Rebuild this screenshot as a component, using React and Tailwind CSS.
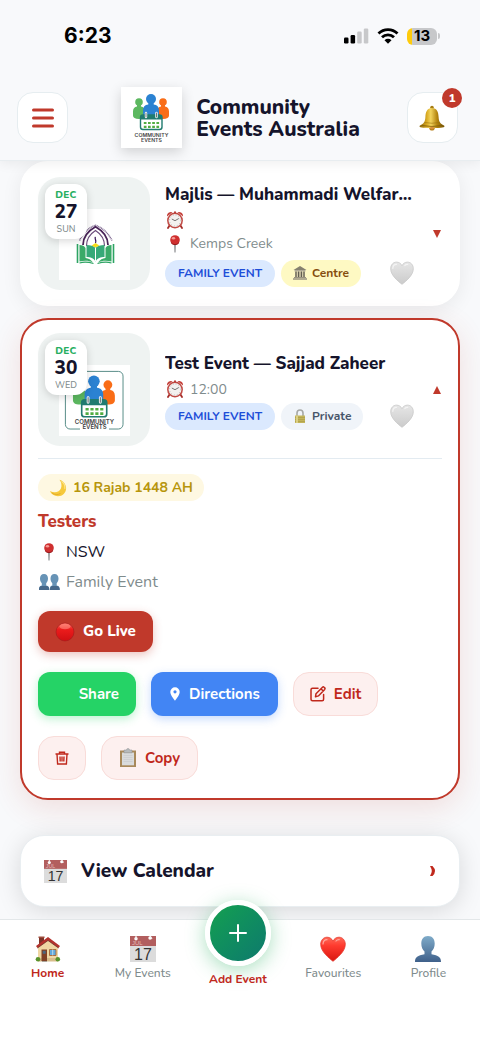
import React, { useState } from "react";

const BellIcon = () => (
  <svg width="26" height="26" viewBox="0 0 26 26" aria-hidden="true">
    <defs>
      <linearGradient id="bellGold" x1="0" x2="1">
        <stop offset="0" stopColor="#8a6508" />
        <stop offset="0.3" stopColor="#dcae26" />
        <stop offset="0.45" stopColor="#f2d45e" />
        <stop offset="0.7" stopColor="#b5850f" />
        <stop offset="1" stopColor="#735204" />
      </linearGradient>
    </defs>
    <circle cx="13" cy="2.6" r="1.8" fill="#a67c12" />
    <circle cx="13" cy="22.8" r="2.8" fill="#b8801c" />
    <path d="M13 3c5 0 6.4 4 6.6 9 .2 4.500 1.500 6.600 5.400 8.600.8.500.5 1.500-.5 1.700-7 1.200-16 1.200-23 0-1-.2-1.300-1.200-.5-1.700 3.900-2 5.200-4.100 5.400-8.600C6.600 7 8 3 13 3z" fill="url(#bellGold)" />
    <path d="M2.500 20.500q10.500 2 21 0" stroke="#7c5908" strokeWidth="0.8" fill="none" />
    <path d="M5.500 17.500q7.500 1.500 15 0" stroke="#9c7410" strokeWidth="0.6" fill="none" />
    <ellipse cx="13" cy="23" rx="2" ry="1.300" fill="#d98f3a" />
  </svg>
);

const ClockIcon = () => (
  <svg width="18" height="18" viewBox="0 0 18 18" aria-hidden="true">
    <path d="M3.500 14.500 2 17M14.500 14.500 16 17" stroke="#a52d28" strokeWidth="1.800" strokeLinecap="round" />
    <path d="M1 5.500A4 4 0 0 1 6.500 1.300zM17 5.500a4 4 0 0 0-5.500-4.200z" fill="#c4403a" />
    <path d="M8 .5h2v2H8z" fill="#b43a34" />
    <circle cx="9" cy="9.500" r="7.200" fill="#f3f1ef" stroke="#c04a44" strokeWidth="1.500" />
    <circle cx="9" cy="9.500" r="5.500" fill="none" stroke="#8d8d8d" strokeWidth="0.700" strokeDasharray="0.700 2.180" />
    <path d="M5.800 8 9 9.700l3.800-2.200" stroke="#666" strokeWidth="0.900" fill="none" />
  </svg>
);

const PinIcon = () => (
  <svg width="20" height="18" viewBox="0 0 20 18" aria-hidden="true">
    <path d="M9.200 8h1.600l-.3 9.500h-1z" fill="#7d7f82" />
    <circle cx="10" cy="5" r="4.800" fill="#cf2f2f" />
    <path d="M6 7.500a4.800 4.800 0 0 0 8 0" stroke="#94191c" strokeWidth="1" fill="none" />
    <ellipse cx="8.500" cy="3.200" rx="1.700" ry="1.300" fill="#f59b95" />
  </svg>
);

const HeartIcon = ({ red, className }) => (
  <svg className={className} viewBox="0 0 26 26" aria-hidden="true">
    <defs>
      <linearGradient id="heartRed" x1="0" y1="0" x2="0" y2="1">
        <stop offset="0" stopColor="#ff6a58" />
        <stop offset="0.350" stopColor="#ff3b2f" />
        <stop offset="1" stopColor="#d8160f" />
      </linearGradient>
      <linearGradient id="heartGrey" x1="0" y1="0" x2="0" y2="1">
        <stop offset="0" stopColor="#e6e6e6" />
        <stop offset="1" stopColor="#cbcbcb" />
      </linearGradient>
    </defs>
    <path
      d="M13 25.300C9 22 .7 15.700.7 8.300.7 4.400 3.400 1.200 7 1.200c2.700 0 4.900 1.500 6 3.900 1.100-2.400 3.300-3.900 6-3.900 3.600 0 6.300 3.200 6.300 7.100 0 7.400-8.300 13.700-12.300 17z"
      fill={red ? "url(#heartRed)" : "url(#heartGrey)"}
      stroke={red ? "#e4382c" : "#c8c8c8"}
      strokeWidth="0.800"
    />
    <path d="M3 8c.2-2.500 2-4.300 4-4.300M16 5c.8-1 2-1.400 3.200-1.300" stroke={red ? "#ffa79d" : "#f4f4f4"} strokeWidth="1.200" fill="none" strokeLinecap="round" />
  </svg>
);

const CalendarIcon = ({ className }) => (
  <svg className={className} viewBox="0 0 26 26" aria-hidden="true">
    <path d="M0 0h26v26H0z" fill="#dcdcdc" />
    <path d="M0 0h26v10H0z" fill="#b25e5e" />
    <circle cx="6" cy="2.800" r="1.700" fill="#fff" />
    <circle cx="20" cy="2" r="1.700" fill="#fff" />
    <path d="M6 0v3M20 0l2 3" stroke="#f2f2f2" strokeWidth="1.200" />
    <text x="2" y="9" fontSize="6" fontWeight="400" fill="#e3b9b9" fontFamily="Liberation Sans, sans-serif">JUL</text>
    <text x="13" y="23.500" fontSize="16" fontWeight="400" textAnchor="middle" fill="#333" fontFamily="Liberation Sans, sans-serif">17</text>
  </svg>
);

const CentreIcon = () => (
  <svg width="14" height="14" viewBox="0 0 14 14" aria-hidden="true">
    <path d="M7 0 13.500 4H.5z" fill="#85806f" />
    <path d="M1.500 4h11v1.500h-11z" fill="#b0aa96" />
    <path d="M2 5.500h10V11H2z" fill="#d8d0ae" />
    <path d="M3 5.500V11M5.600 5.500V11M8.400 5.500V11M11 5.500V11" stroke="#615d50" strokeWidth="1.300" />
    <path d="M1 11h12v1H1zM0 12.200h14v1.500H0z" fill="#999280" />
  </svg>
);

const LockIcon = () => (
  <svg width="14" height="14" viewBox="0 0 14 14" aria-hidden="true">
    <path d="M4 7V4a3 3 0 0 1 6 0v3" stroke="#a6a8a5" strokeWidth="1.600" fill="none" />
    <path d="M2 6.500h10V14H2z" fill="#c3b45a" />
    <path d="M2 8.500h10M2 10.500h10M2 12.500h10" stroke="#a89944" strokeWidth="0.600" />
    <path d="M3 6.500h2V14H3z" fill="#dbcf83" />
  </svg>
);

const MoonIcon = () => (
  <svg width="18" height="18" viewBox="0 0 18 18" aria-hidden="true">
    <path d="M10.500.8c4 1.200 6.600 4.700 6.600 8.500 0 4.500-3.600 8-8.200 8-3.600 0-6.700-2-8-5.200 5 2.400 9.500 1 11-2.600 1.200-3 .5-6.200-1.400-8.700z" fill="#f6c93c" />
    <path d="M12.500 2.500c2.800 1.800 3.700 4.700 3.300 7.300" stroke="#fbe38a" strokeWidth="1.200" fill="none" />
    <path d="M3 14c2.500 1.800 6 2 8.500.5" stroke="#e0a92a" strokeWidth="0.900" fill="none" />
  </svg>
);

const PeopleIcon = () => (
  <svg width="22" height="18" viewBox="0 0 22 18" aria-hidden="true">
    <g fill="#6793b6">
      <path d="M6 1c2.600 0 4 1.900 4 4.500 0 2-.8 3.700-1.800 4.700v2.300c2.600.6 3.100 1.800 3.100 4.500H1c0-2.700.4-3.900 2.800-4.500v-2.300C2.800 9.200 2 7.500 2 5.500 2 2.900 3.400 1 6 1z" />
      <path d="M16.500 1c2.600 0 4 1.900 4 4.500 0 2-.8 3.700-1.800 4.700v2.300c2.500.6 3 1.800 3 4.500H12c0-2.700-.1-3.900 2.300-4.500v-2.300c-1-1-1.800-2.700-1.800-4.700 0-2.600 1.400-4.500 4-4.500z" />
    </g>
    <path d="M1 17c0-2.400.4-3.400 2-4.100h6c1.800.7 2.300 1.700 2.300 4.100zM12 17c0-2.400.4-3.400 2-4.100h5.500c1.800.7 2.200 1.700 2.200 4.100z" fill="#47688a" />
  </svg>
);

const ProfileIcon = () => (
  <svg width="26" height="26" viewBox="0 0 26 26" aria-hidden="true">
    <defs>
      <linearGradient id="bustBlue" x1="0" y1="0" x2="0" y2="1">
        <stop offset="0" stopColor="#7fabc9" />
        <stop offset="1" stopColor="#3f608a" />
      </linearGradient>
    </defs>
    <path d="M13 0c4.600 0 6.700 3.200 6.700 7.600 0 3.400-1.300 6.300-3.200 8v2.700c6.800 1.300 9.500 2.700 9.500 7.700H0c0-5 2.700-6.400 9.500-7.700v-2.700c-1.900-1.700-3.200-4.600-3.200-8C6.300 3.200 8.400 0 13 0z" fill="url(#bustBlue)" />
  </svg>
);

const HouseIcon = () => (
  <svg width="26" height="26" viewBox="0 0 26 26" aria-hidden="true">
    <path d="M4 1.500h5V10H4z" fill="#7c3328" />
    <path d="M3.500.5h6V2h-6z" fill="#9d4b3b" />
    <path d="M3 10 13 3l10 7v15H3z" fill="#f0d7a4" />
    <path d="M3 22h20v3.500H3z" fill="#d8bd8b" />
    <path d="M13 1 25 10l-1.500 2L13 4.500 2.500 12 1 10z" fill="#b4332e" />
    <path d="M13 4.500 2.500 12M13 4.500 23.500 12" stroke="#612721" strokeWidth="0.700" />
    <path d="M6.500 13.500h5.500V25H6.500z" fill="#814126" />
    <path d="M7.700 14.800h3v3h-3z" fill="#4e6780" />
    <path d="M14.500 13.500h6.500v6h-6.500z" fill="#62a9dc" stroke="#a9652f" strokeWidth="0.900" />
    <path d="M17.700 13.500v6" stroke="#dfedf5" strokeWidth="0.700" />
    <circle cx="3" cy="23.300" r="2.300" fill="#59922b" />
    <circle cx="22.800" cy="23.300" r="2.300" fill="#59922b" />
    <path d="M7 25h5v1H7z" fill="#a9a49a" />
  </svg>
);

const RedCircleIcon = () => (
  <svg width="20" height="20" viewBox="0 0 20 20" aria-hidden="true">
    <defs>
      <linearGradient id="ballRed" x1="0" y1="0" x2="0" y2="1">
        <stop offset="0" stopColor="#ff6b5e" />
        <stop offset="0.350" stopColor="#ec1c1c" />
        <stop offset="1" stopColor="#d00f12" />
      </linearGradient>
    </defs>
    <circle cx="10" cy="10" r="9" fill="url(#ballRed)" stroke="#98191a" strokeWidth="0.500" />
    <ellipse cx="10" cy="4.500" rx="5.500" ry="2.800" fill="#ff9d90" opacity="0.500" />
  </svg>
);

const ClipboardIcon = () => (
  <svg width="18" height="20" viewBox="0 0 18 20" aria-hidden="true">
    <path d="M1 2.500h16V19H1z" fill="#a8895a" />
    <path d="M3 4.500h12v12.800H3z" fill="#d9dbdc" />
    <path d="M4.500 7.500h9M4.500 9.500h9M4.500 11.500h9M4.500 13.500h9" stroke="#c8cbcd" strokeWidth="0.700" />
    <path d="M5 2h2.500a1.500 1.500 0 0 1 3 0H13v2.800H5z" fill="#b7bbbd" stroke="#8b8f91" strokeWidth="0.500" />
  </svg>
);

const EditIcon = () => (
  <svg width="16" height="16" viewBox="0 0 16 16" fill="none" stroke="currentColor" strokeWidth="1.500" strokeLinejoin="round" aria-hidden="true">
    <path d="M8 2.200H2.500c-.9 0-1.500.6-1.500 1.500v9.600c0 .9.600 1.500 1.500 1.500h9.600c.9 0 1.500-.6 1.500-1.500V8.500" strokeLinecap="round" />
    <path d="m5.500 10.700.5-3L12.500 1.200c.5-.5 1.100-.4 1.500 0l.7.7c.4.400.4 1 0 1.500L8.400 9.900zM11 2.800l2.200 2.200" />
  </svg>
);

const TrashIcon = () => (
  <svg width="14" height="14" viewBox="0 0 14 14" fill="none" stroke="currentColor" strokeWidth="1.400" aria-hidden="true">
    <path d="M.5 3h13M4.500 3V1.200h5V3M2 3l.6 10h8.800L12 3M5 5.500l.2 5M7 5.500v5M9 5.500l-.2 5" />
  </svg>
);

const PlaceIcon = () => (
  <svg width="12" height="14" viewBox="0 0 12 14" aria-hidden="true">
    <path d="M6 .3a4.700 4.700 0 0 0-4.700 4.700C1.300 8.200 6 13.700 6 13.700s4.700-5.500 4.700-8.700A4.700 4.700 0 0 0 6 .3z" fill="#fff" />
    <circle cx="6" cy="4.800" r="1.600" fill="#4285f4" />
  </svg>
);

const CommunityLogo = ({ framed, className }) => (
  <svg className={className} viewBox="0 0 61 61" role="img" aria-label="Community Events">
    <path d="M0 0h61v61H0z" fill="#fff" />
    {framed && <rect x="5.500" y="5.500" width="49.500" height="49.500" rx="4" fill="none" stroke="#4d8580" strokeWidth="0.800" />}
    <g transform={framed ? "translate(0 2.500)" : "translate(0 0.500)"}>
      <g fill="#5cb860">
        <circle cx="18" cy="14.500" r="3.800" />
        <path d="M16 17h4v2c2.500.4 4 2 4 5v4c0 2-2 3.500-6 3.500s-6-1.500-6-3.500v-4c0-3 1.500-4.600 4-5z" />
      </g>
      <g fill="#f96d17">
        <circle cx="42" cy="14.500" r="3.800" />
        <path d="M40 17h4v2c2.500.4 4 2 4 5v4c0 2-2 3.500-6 3.500s-6-1.500-6-3.500v-4c0-3 1.500-4.600 4-5z" />
      </g>
      <path d="M27.300 15h5.400v2c3.500.4 5.300 2.500 5.300 6v5H22v-5c0-3.500 1.800-5.600 5.300-6z" fill="#2b82d2" />
      <circle cx="30" cy="11.500" r="5" fill="#2b82d2" />
      <rect x="19.500" y="27.500" width="21.500" height="14.500" rx="2.500" fill="#fff" stroke="#207b6f" strokeWidth="1.400" />
      <path d="M19.500 32v-2c0-1.700 1-2.600 2.500-2.600h16.500c1.500 0 2.500.9 2.500 2.600v2z" fill="#207b6f" />
      <path d="M25 25.500v4M35.500 25.500v4" stroke="#fff" strokeWidth="2.400" strokeLinecap="round" />
      <path d="M25 25.500v4M35.500 25.500v4" stroke="#67767a" strokeWidth="1" strokeLinecap="round" />
      <path d="M22.800 35.500h15.500M22.800 39.300h15.500" stroke="#51ad42" strokeWidth="2.200" strokeDasharray="2.700 1.500" />
    </g>
    {framed && <path d="M18 51h25v6H18z" fill="#fff" />}
    <text x="30.500" y="50.300" textAnchor="middle" fontSize="5.200" fontWeight="600" fill="#444" fontFamily="Inter, sans-serif">COMMUNITY</text>
    <text x="30.500" y="55.300" textAnchor="middle" fontSize="5.200" fontWeight="600" fill="#444" fontFamily="Inter, sans-serif">EVENTS</text>
  </svg>
);

const WelfareLogo = ({ className }) => (
  <svg className={className} viewBox="0 0 71 71" role="img" aria-label="Muhammadi Welfare">
    <path d="M0 0h71v71H0z" fill="#fff" />
    <path d="M20.500 31.500C24 24 30 18.500 36.500 16.300 43 18.500 49.500 24 53 31.500" fill="none" stroke="#7d668f" strokeWidth="1.500" strokeDasharray="1 0.600" />
    <path d="M24 36c0-8 5-14 12.500-18.200C44 22 49 28 49 36" fill="none" stroke="#492358" strokeWidth="1.800" />
    <path d="M27.500 37c0-7 3.500-12 9-15.500 5.500 3.500 9 8.500 9 15.500" fill="none" stroke="#6b4b7b" strokeWidth="1.200" />
    <path d="M36.500 28c-1.500 1.800 1.500 3 0 6" fill="none" stroke="#3b1957" strokeWidth="1.300" />
    <path d="M18.500 35v19M54.500 35v19" stroke="#2da463" strokeWidth="1.600" />
    <path d="M20.500 36c3 0 5 1 6 3v10c3 .3 5.500 1.700 7.500 4.500-4-2-8-2.500-13.500-1zM52.500 36c-3 0-5 1-6 3v10c-3 .3-5.500 1.700-7.500 4.500 4-2 8-2.500 13.500-1z" fill="#3aaa68" />
    <path d="M27.500 36c4 0 7 .8 9 3 2-2.200 5-3 9-3v12c-4 0-7 1-9 4.500-2-3.500-5-4.500-9-4.500z" fill="#36a978" />
    <path d="M36.500 39v13" stroke="#fff" strokeWidth="1" />
    <path d="M20.500 54c5-1.600 9-1 14 .5M52.500 54c-5-1.600-9-1-14 .5" stroke="#2da463" strokeWidth="1.200" fill="none" />
    <path d="m36.500 34 3.800 2.500-3.800 2-3.800-2z" fill="#f5dc18" />
  </svg>
);

const Arrow = ({ up }) => (
  <svg width="10" height="10" viewBox="0 0 10 10" aria-hidden="true">
    <path d={up ? "M5 1 9 9H1z" : "M1 1h8L5 9z"} fill="#c0392b" />
  </svg>
);

function StatusBar() {
  return (
    <div className="flex h-[72px] items-center justify-between pr-10 pl-16 text-black">
      <span className="font-['Inter'] text-[21px] leading-7 font-bold">6:23</span>
      <div className="flex items-center gap-2">
        <svg width="25" height="16" viewBox="0 0 25 16" aria-hidden="true">
          <rect x="0" y="9.500" width="4.500" height="6" rx="1.200" />
          <rect x="6.600" y="7" width="4.500" height="8.500" rx="1.200" />
          <rect x="13.200" y="3.500" width="4.500" height="12" rx="1.200" fill="#c7c8ca" />
          <rect x="19.800" y="0.500" width="4.500" height="15" rx="1.200" fill="#c7c8ca" />
        </svg>
        <svg width="22" height="16" viewBox="0 0 22 16" aria-hidden="true">
          <path d="M1.500 5.500a13.500 13.500 0 0 1 19 0M5 9.300a8.500 8.500 0 0 1 12 0" fill="none" stroke="#000" strokeWidth="2.800" />
          <path d="M11 15.700 7.500 12.200a5 5 0 0 1 7 0z" />
        </svg>
        <div className="flex items-center">
          <span className="flex h-[17px] w-[30px] items-center justify-center rounded-md bg-linear-to-r from-[#fecb0c] from-15% to-[#c7c8ca] to-15% font-['Inter'] text-[15px] leading-4 font-bold">13</span>
          <span className="ml-px h-[6px] w-[2px] rounded-r-full bg-[#c7c8ca]" />
        </div>
      </div>
    </div>
  );
}

function Header() {
  return (
    <header className="sticky top-0 z-20 border-b border-[#e8edf0] bg-[#f8f9fb] shadow-[0_2px_12px_rgba(0,0,0,0.07)]">
      <StatusBar />
      <div className="flex items-center justify-between pt-[15px] pr-[22px] pb-3 pl-[17px]">
        <button type="button" aria-label="Menu" className="flex size-[51px] items-center justify-center rounded-2xl border border-[#e6edf0] bg-white">
          <svg width="22" height="20" viewBox="0 0 22 20" stroke="#c0392b" strokeWidth="3" strokeLinecap="round" aria-hidden="true">
            <path d="M1.500 2h19M1.500 10h19M1.500 18h19" />
          </svg>
        </button>
        <div className="flex items-center gap-[14px] pl-1.5">
          <CommunityLogo className="size-[61px] shadow-[0_4px_12px_rgba(0,0,0,0.16)]" />
          <h1 className="text-[21px] leading-[22px] font-extrabold text-[#15142b]">
            Community
            <br />
            Events Australia
          </h1>
        </div>
        <button type="button" aria-label="Notifications" className="relative flex size-[51px] items-center justify-center rounded-2xl border border-[#e6edf0] bg-white">
          <BellIcon />
          <span className="absolute -top-[5px] -right-[5px] flex size-5 items-center justify-center rounded-full bg-[#c0392b] text-[12px] font-extrabold text-white">1</span>
        </button>
      </div>
    </header>
  );
}

function EventSummary({ month, day, weekday, logo, title, time, place, tag, open, onToggle }) {
  return (
    <div className="flex items-center gap-[15px]">
      <div className="relative flex h-[113px] w-28 shrink-0 items-end justify-center rounded-[22px] bg-[#eff3f2] pb-[10px]">
        {logo}
        <div className="absolute top-[7px] left-[7px] flex h-[55px] w-[42px] flex-col items-center justify-center rounded-xl bg-white shadow-[0_2px_8px_rgba(0,0,0,0.16)]">
          <span className="text-[10px] leading-3 font-extrabold tracking-wide text-[#27ae60]">{month}</span>
          <span className="text-[19px] leading-[22px] font-extrabold text-[#15142b]">{day}</span>
          <span className="text-[9px] leading-3 font-medium text-[#7f8c8d]">{weekday}</span>
        </div>
      </div>
      <div className="min-w-0 flex-1">
        <h2 className="truncate text-[17px] leading-7 font-extrabold text-[#15142b]">{title}</h2>
        <p className="flex h-[23px] items-center gap-[6px] pl-px text-[14px] text-[#7f8c8d]">
          <ClockIcon />
          {time}
        </p>
        {place && (
          <p className="mb-1 flex h-6 items-center gap-[5px] text-[14px] text-[#7f8c8d]">
            <PinIcon />
            {place}
          </p>
        )}
        <div className="mt-[2px] flex h-[27px] items-center gap-[6px]">
          <span className="flex h-full items-center rounded-full bg-[#dbe9fe] px-[13px] text-[12px] font-bold whitespace-nowrap text-[#1d4ed8]">FAMILY EVENT</span>
          {tag}
          <button type="button" aria-label="Favourite" className="mr-[3px] ml-auto">
            <HeartIcon className="size-6" />
          </button>
        </div>
      </div>
      <button type="button" aria-label={open ? "Collapse" : "Expand"} onClick={onToggle}>
        <Arrow up={open} />
      </button>
    </div>
  );
}

const softButton = "flex h-11 items-center gap-2 rounded-2xl border border-[#f9dcd9] bg-[#fdf0ef] text-[15px] font-bold text-[#c0281c]";

function EventDetails() {
  return (
    <div className="mt-3 border-t border-[#e3ebf1] pt-[15px]">
      <div className="flex h-[27px] w-fit items-center gap-[6px] rounded-full bg-[#fef8e2] px-[11px] text-[14px] font-bold text-[#b7950b]">
        <MoonIcon />
        16 Rajab 1448 AH
      </div>
      <h3 className="mt-[9px] text-[17px] leading-6 font-extrabold text-[#c0392b]">Testers</h3>
      <p className="mt-[6px] flex h-6 items-center gap-[7px] pl-px text-[16px] text-[#15142b]">
        <PinIcon />
        NSW
      </p>
      <p className="mt-[6px] flex h-6 items-center gap-[6px] text-[16px] text-[#7f8c8d]">
        <PeopleIcon />
        Family Event
      </p>
      <button type="button" className="mt-[17px] flex h-[41px] items-center gap-2 rounded-xl bg-[#c0392b] px-[17px] text-[15px] font-extrabold text-white shadow-[0_3px_10px_rgba(192,57,43,0.3)]">
        <RedCircleIcon />
        Go Live
      </button>
      <div className="mt-5 flex flex-wrap gap-x-[15px] gap-y-5 pr-4">
        <button type="button" className="flex h-11 w-[98px] items-center justify-end rounded-xl bg-[#25d366] pr-[17px] text-[15px] font-bold text-white shadow-[0_3px_10px_rgba(37,211,102,0.3)]">Share</button>
        <button type="button" className="flex h-11 items-center gap-2 rounded-xl bg-[#4285f4] px-[18px] text-[15px] font-bold text-white shadow-[0_3px_10px_rgba(66,133,244,0.3)]">
          <PlaceIcon />
          Directions
        </button>
        <button type="button" className={`${softButton} px-4`}>
          <EditIcon />
          Edit
        </button>
        <button type="button" aria-label="Delete" className={`${softButton} px-4`}>
          <TrashIcon />
        </button>
        <button type="button" className={`${softButton} px-[17px]`}>
          <ClipboardIcon />
          Copy
        </button>
      </div>
    </div>
  );
}

function EventCard({ expanded = false, ...event }) {
  const [open, setOpen] = useState(expanded);
  return (
    <article
      className={
        open
          ? "rounded-[28px] border-2 border-[#c0392b] bg-white px-4 pt-[13px] pb-[18px] shadow-[0_8px_30px_rgba(192,57,43,0.14)]"
          : "rounded-[28px] border-2 border-white bg-white px-4 py-[14px] shadow-[0_4px_20px_rgba(0,0,0,0.07)]"
      }
    >
      <EventSummary {...event} open={open} onToggle={() => setOpen(!open)} />
      {open && <EventDetails />}
    </article>
  );
}

const navItem = "flex flex-1 flex-col items-center gap-[3px] text-[12px] leading-4";

function BottomNav() {
  return (
    <nav className="sticky bottom-0 z-20 flex border-t border-[#e3e7e9] bg-white pt-4 pr-1 pb-[60px]">
      <a href="#home" className={`${navItem} font-bold text-[#c0281c]`}>
        <HouseIcon />
        Home
      </a>
      <a href="#events" className={`${navItem} font-medium text-[#7f8c8d]`}>
        <CalendarIcon className="size-[26px]" />
        My Events
      </a>
      <a href="#add" className="-mt-9 flex flex-1 flex-col items-center gap-[5px] text-[12px] leading-4 font-bold text-[#c0281c]">
        <span className="flex size-[66px] items-center justify-center rounded-full border-5 border-white bg-linear-to-br from-[#16a34a] to-[#0f766e] bg-origin-border shadow-[0_4px_20px_rgba(39,174,96,0.4)]">
          <svg width="18" height="18" viewBox="0 0 18 18" stroke="#fff" strokeWidth="2" strokeLinecap="round" aria-hidden="true">
            <path d="M9 1v16M1 9h16" />
          </svg>
        </span>
        Add Event
      </a>
      <a href="#favourites" className={`${navItem} font-medium text-[#7f8c8d]`}>
        <HeartIcon red className="size-[26px]" />
        Favourites
      </a>
      <a href="#profile" className={`${navItem} font-medium text-[#7f8c8d]`}>
        <ProfileIcon />
        Profile
      </a>
    </nav>
  );
}

export default function App() {
  return (
    <div className="flex min-h-screen flex-col bg-[#f8f9fb] font-['Nunito','Open_Sans',sans-serif]">
      <Header />
      <main className="flex flex-1 flex-col gap-3 px-5 pb-3">
        <EventCard
          month="DEC"
          day="27"
          weekday="SUN"
          title="Majlis — Muhammadi Welfare Association"
          time=""
          place="Kemps Creek"
          logo={<WelfareLogo className="size-[71px]" />}
          tag={
            <span className="flex h-full items-center gap-[5px] rounded-full bg-[#fef9c3] px-3 text-[12px] font-bold text-[#854d0e]">
              <CentreIcon />
              Centre
            </span>
          }
        />
        <EventCard
          expanded
          month="DEC"
          day="30"
          weekday="WED"
          title="Test Event — Sajjad Zaheer"
          time="12:00"
          logo={<CommunityLogo framed className="size-[71px]" />}
          tag={
            <span className="flex h-full items-center gap-[5px] rounded-full bg-[#f0f4f9] px-3 text-[12px] font-bold text-[#475569]">
              <LockIcon />
              Private
            </span>
          }
        />
        <button type="button" className="mt-[23px] flex h-[72px] items-center gap-[14px] rounded-3xl border border-[#e9eef1] bg-white px-[23px] text-[19px] font-extrabold text-[#15142b] shadow-[0_4px_24px_rgba(0,0,0,0.13)]">
          <CalendarIcon className="size-[23px]" />
          View Calendar
          <svg className="ml-auto" width="7" height="12" viewBox="0 0 7 12" fill="#c0281c" aria-hidden="true">
            <path d="M1 1h2.500Q6 3.500 6 6T3.500 11H1Q2.800 8 2.800 6T1 1z" />
          </svg>
        </button>
      </main>
      <BottomNav />
    </div>
  );
}
